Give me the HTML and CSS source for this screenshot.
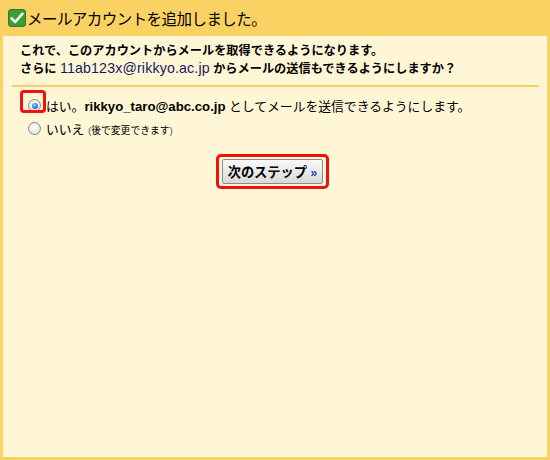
FILE: index.html
```html
<!DOCTYPE html>
<html lang="ja">
<head>
<meta charset="utf-8">
<link rel="stylesheet" href="styles.css">
</head>
<body>
<div class="frame">
  <div class="header">
    <svg class="check" width="18" height="18" viewBox="0 0 18 18">
      <rect x="0.5" y="0.5" width="17" height="17" rx="2.5" fill="#3f9b35" stroke="#2f7f28"/>
      <path d="M3.6 9.4 L7.2 13 L14.4 4.8" fill="none" stroke="#fff" stroke-width="2.6" stroke-linecap="round" stroke-linejoin="round"/>
    </svg>
    <span class="title">メールアカウントを追加しました。</span>
  </div>
  <div class="panel">
    <div class="intro">
      <p>これで、このアカウントからメールを取得できるようになります。</p>
      <p>さらに <span class="addr">11ab123x@rikkyo.ac.jp</span> からメールの送信もできるようにしますか？</p>
    </div>
    <div class="rule"></div>
    <div class="options">
      <div class="opt">
        <span class="radio checked"></span>
        <span class="hl"></span>
        <span>はい。<b class="mail">rikkyo_taro@abc.co.jp</b> としてメールを送信できるようにします。</span>
      </div>
      <div class="opt">
        <span class="radio"></span>
        <span>いいえ <small class="note"><span class="paren">(</span>後で変更できます<span class="paren">)</span></small></span>
      </div>
    </div>
    <div class="actions">
      <span class="btnwrap">
        <button class="btn">次のステップ <span class="raquo">»</span></button>
      </span>
    </div>
  </div>
</div>
</body>
</html>
```
FILE: styles.css
```css
html, body {
  margin: 0;
  padding: 0;
}
body {
  font-family: "Liberation Sans", "Noto Sans CJK JP", sans-serif;
  color: #000;
}
.frame {
  width: 550px;
  height: 460px;
  background: #fad264;
  display: flex;
  flex-direction: column;
  box-sizing: border-box;
  padding: 0 3px 3px 3px;
}
.header {
  height: 36px;
  display: flex;
  align-items: center;
  padding-left: 5px;
  box-sizing: border-box;
}
.check {
  display: block;
  flex: none;
  margin-top: -1px;
}
.title {
  font-family: "Noto Sans CJK JP", sans-serif;
  font-size: 15.5px;
  margin-left: 1px;
  letter-spacing: -0.55px;
  line-height: 18px;
}
.panel {
  flex: 1;
  background: #fff6d6;
  position: relative;
}
.intro {
  padding: 7px 0 0 17px;
  font-size: 12.2px;
  font-weight: bold;
  line-height: 17px;
}
.intro p {
  margin: 0;
}
.addr {
  font-weight: normal;
  color: #1a1a60;
  font-size: 14.2px;
  letter-spacing: 0.15px;
}
.rule {
  height: 2px;
  background: #f6cf60;
  margin: 7px 8px 0 9px;
}
.options {
  padding: 7px 0 0 25px;
  font-size: 12.8px;
  position: relative;
}
.opt {
  display: flex;
  align-items: center;
  height: 23px;
  gap: 5px;
}
.radio {
  width: 11px;
  height: 11px;
  border-radius: 50%;
  border: 1px solid #8a8a8a;
  background: radial-gradient(circle at 50% 40%, #ffffff 0%, #e4e4e4 70%, #cfcfcf 100%);
  position: relative;
  flex: none;
}
.radio.checked::after {
  content: "";
  position: absolute;
  left: 2.5px;
  top: 2.5px;
  width: 6px;
  height: 6px;
  border-radius: 50%;
  background: radial-gradient(circle at 40% 35%, #8fd0ff 0%, #2d7fd0 55%, #0d4a8e 100%);
}
.opt .hl {
  position: absolute;
  left: 17px;
  top: 3px;
  width: 20px;
  height: 17px;
  border: 3px solid #ee1111;
  border-radius: 4px;
}
.mail {
  font-weight: bold;
  font-size: 13.2px;
}
.note {
  font-size: 9.8px;
}
.paren {
  color: #3355aa;
}
.actions {
  display: flex;
  justify-content: center;
  padding-top: 14px;
  padding-right: 5px;
}
.btnwrap {
  border: 3px solid #ee1111;
  border-radius: 5px;
  padding: 2px 3px;
  display: inline-block;
}
.btn {
  font-family: "Liberation Sans", "Noto Sans CJK JP", sans-serif;
  font-weight: bold;
  font-size: 13.2px;
  width: 101px;
  height: 25px;
  border: 1px solid #8a8a8a;
  border-radius: 2px;
  background: linear-gradient(#f8f8f8, #e6e6e6 60%, #d8d8d8);
  color: #000;
  padding: 0;
  display: block;
}
.raquo {
  color: #2244aa;
  font-size: 12px;
}
```
